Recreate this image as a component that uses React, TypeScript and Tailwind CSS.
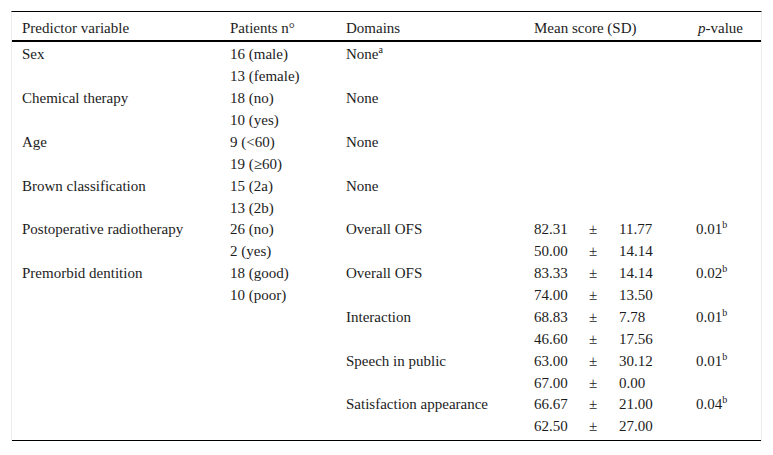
import React from "react";

type Line = {
  variable?: string;
  patients: string;
  domain?: string;
  domainSup?: string;
  mean?: [string, string];
  p?: string;
};

const lines: Line[] = [
  { variable: "Sex", patients: "16 (male)", domain: "None", domainSup: "a" },
  { patients: "13 (female)" },
  { variable: "Chemical therapy", patients: "18 (no)", domain: "None" },
  { patients: "10 (yes)" },
  { variable: "Age", patients: "9 (<60)", domain: "None" },
  { patients: "19 (\u226560)" },
  { variable: "Brown classification", patients: "15 (2a)", domain: "None" },
  { patients: "13 (2b)" },
  { variable: "Postoperative radiotherapy", patients: "26 (no)", domain: "Overall OFS", mean: ["82.31", "11.77"], p: "0.01" },
  { patients: "2 (yes)", mean: ["50.00", "14.14"] },
  { variable: "Premorbid dentition", patients: "18 (good)", domain: "Overall OFS", mean: ["83.33", "14.14"], p: "0.02" },
  { patients: "10 (poor)", mean: ["74.00", "13.50"] },
  { patients: "", domain: "Interaction", mean: ["68.83", "7.78"], p: "0.01" },
  { patients: "", mean: ["46.60", "17.56"] },
  { patients: "", domain: "Speech in public", mean: ["63.00", "30.12"], p: "0.01" },
  { patients: "", mean: ["67.00", "0.00"] },
  { patients: "", domain: "Satisfaction appearance", mean: ["66.67", "21.00"], p: "0.04" },
  { patients: "", mean: ["62.50", "27.00"] },
];

const cols = "grid grid-cols-[208px_116px_188px_163px_1fr] pl-[10px]";

function MeanCell({ mean }: { mean?: [string, string] }) {
  if (!mean) return <div />;
  return (
    <div className="flex">
      <span className="w-[55px]">{mean[0]}</span>
      <span className="w-[30px]">±</span>
      <span>{mean[1]}</span>
    </div>
  );
}

function Sup({ children }: { children: React.ReactNode }) {
  return <span className="relative -top-[6px] text-[10px] leading-none">{children}</span>;
}

export default function App() {
  return (
    <div className="w-[773px] h-[455px] bg-white pt-[11px] pl-[11px] font-['Liberation_Serif','Times_New_Roman',serif]">
      <div className="w-[751px] border-t border-black border-x border-x-[#ececec] text-[15px] text-[#1c1c1c]">
        <div className={`${cols} h-[30px] pt-[4px] items-center border-b-2 border-black leading-none`}>
          <div>Predictor variable</div>
          <div>Patients n°</div>
          <div>Domains</div>
          <div>Mean score (SD)</div>
          <div className="pl-[1px]">
            <i>p</i>-value
          </div>
        </div>
        <div className="pb-[4px] border-b border-black">
          {lines.map((l, i) => (
            <div key={i} className={`${cols} h-[21.875px] pt-[4px] items-center leading-none`}>
              <div>{l.variable}</div>
              <div>{l.patients}</div>
              <div>
                {l.domain}
                {l.domainSup && <Sup>{l.domainSup}</Sup>}
              </div>
              <MeanCell mean={l.mean} />
              <div className="-ml-[1px]">
                {l.p && (
                  <>
                    {l.p}
                    <Sup>b</Sup>
                  </>
                )}
              </div>
            </div>
          ))}
        </div>
      </div>
    </div>
  );
}
